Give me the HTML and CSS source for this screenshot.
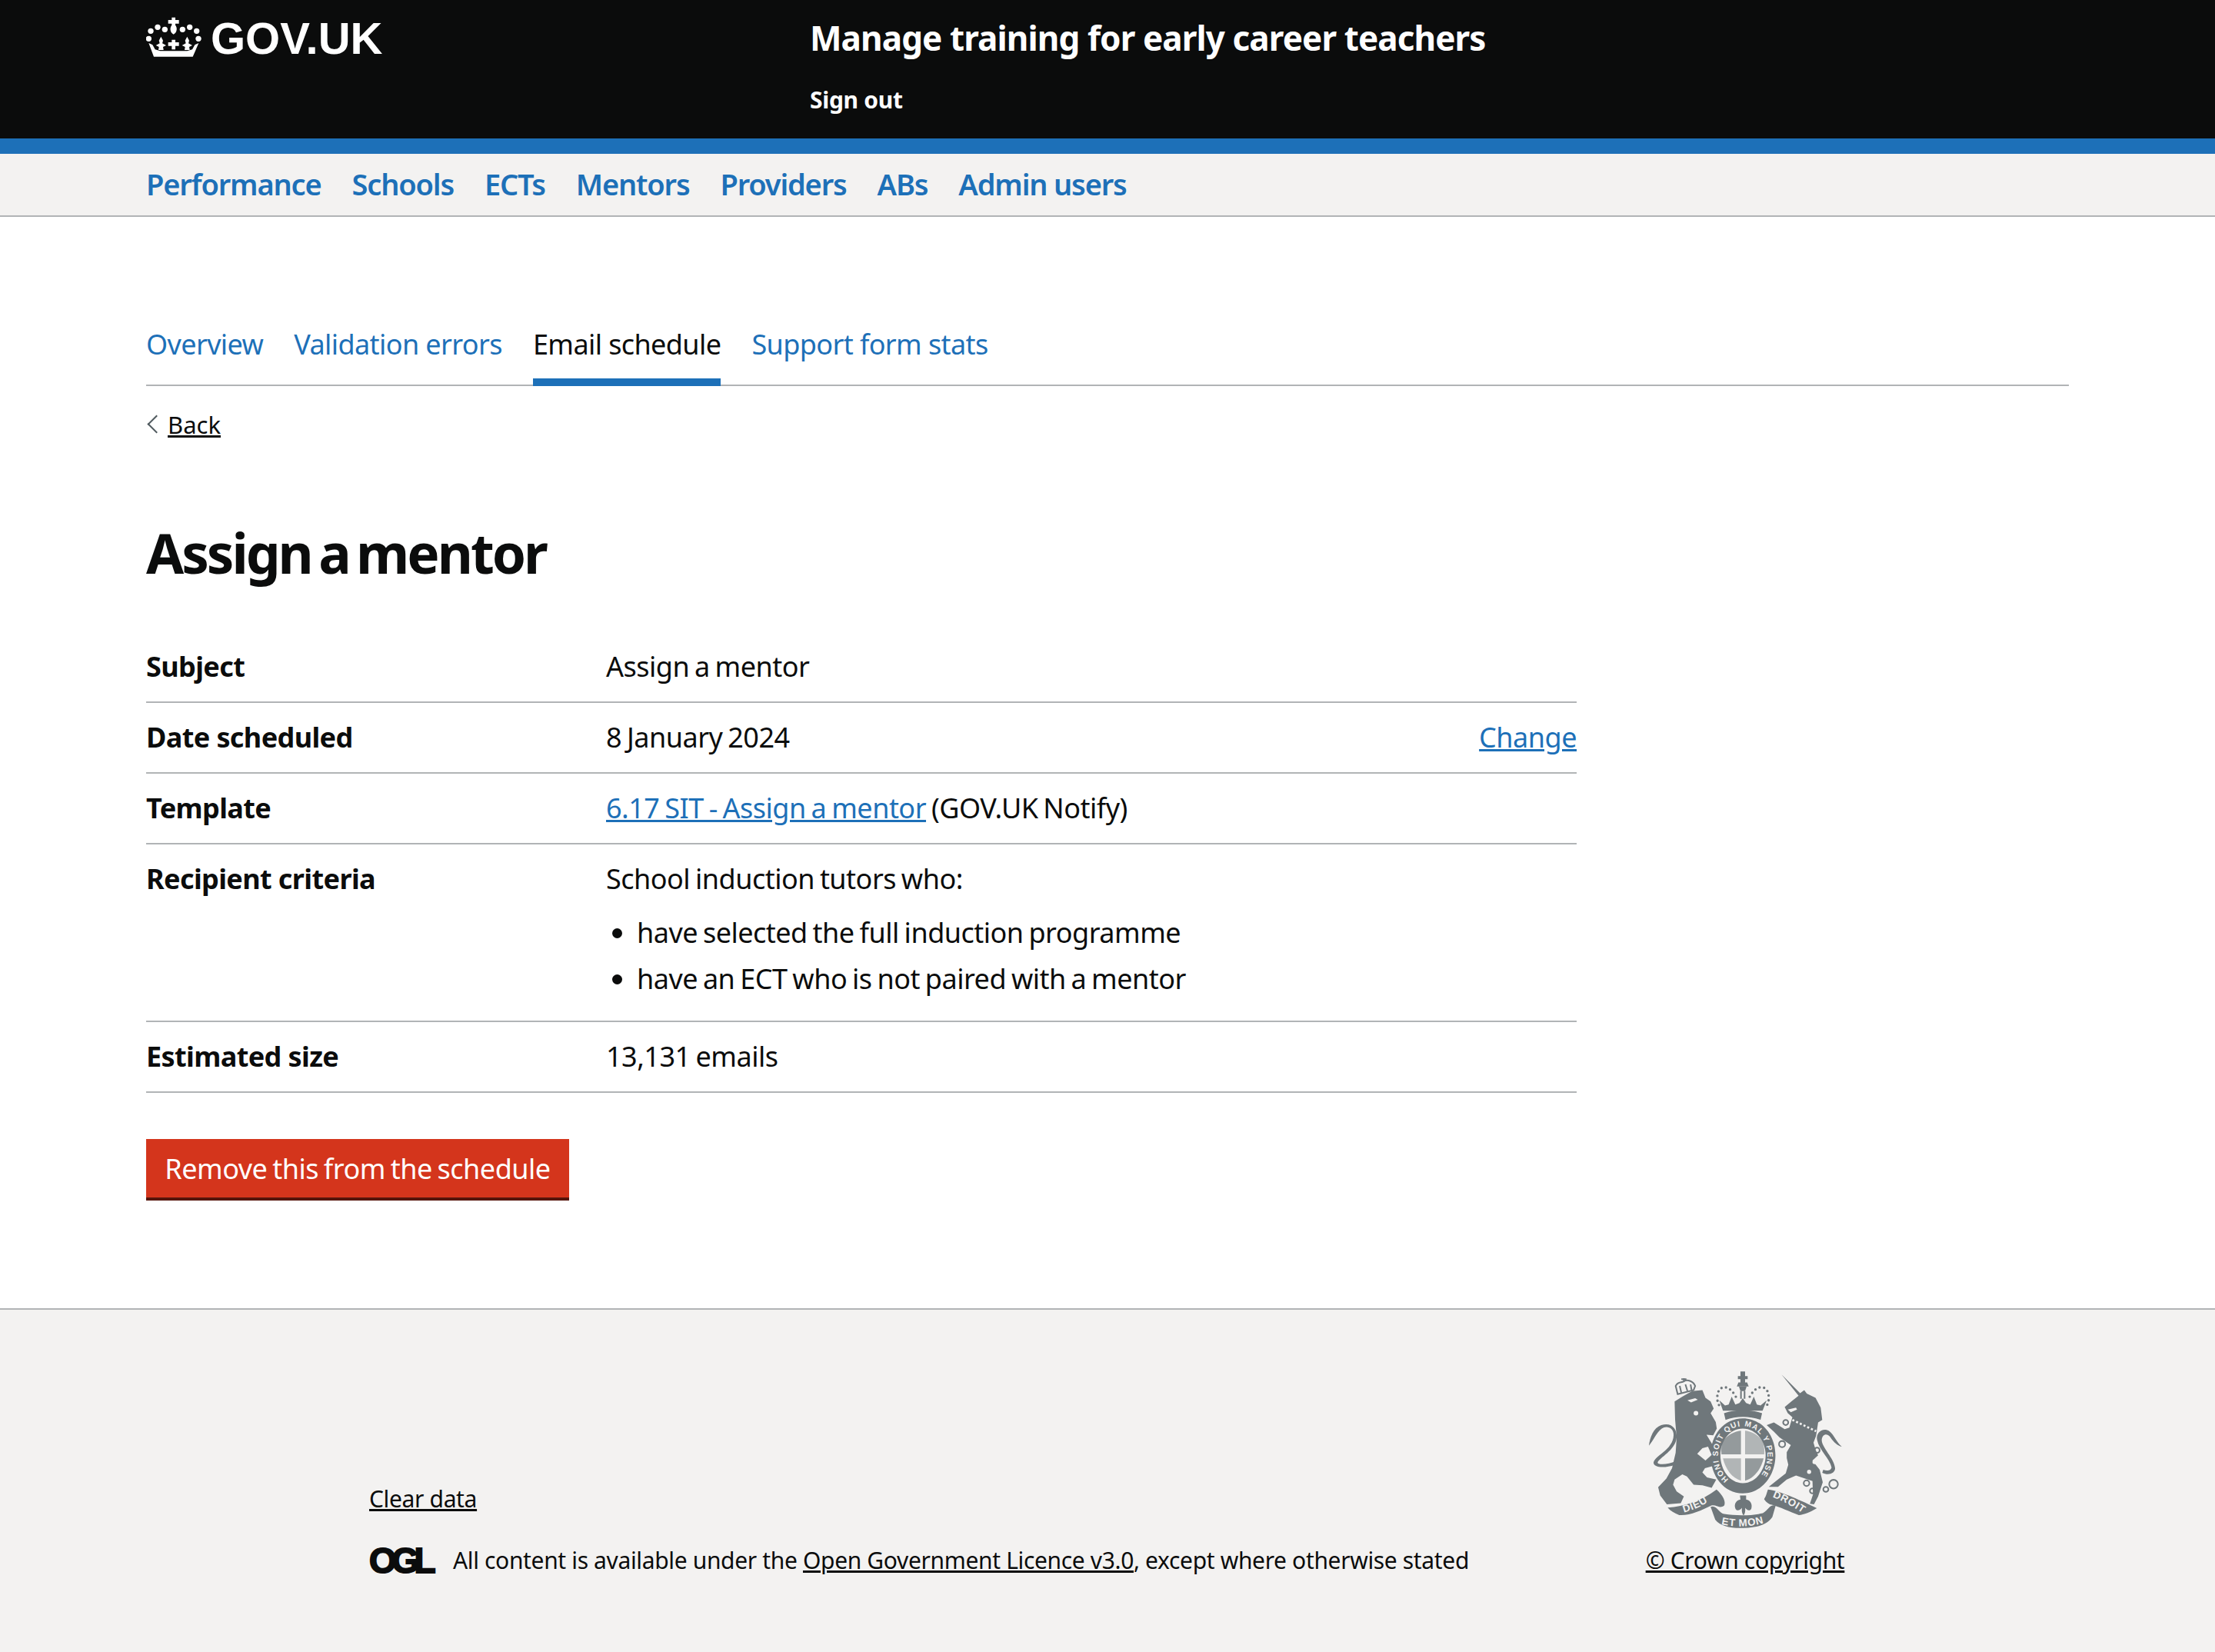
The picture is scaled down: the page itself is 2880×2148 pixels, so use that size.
FILE: index.html
```html
<!DOCTYPE html>
<html lang="en">

<head>
    <meta charset="UTF-8">
    <title>Email schedule - Manage training for early career teachers</title>
    <link rel="stylesheet" href="styles.css">
</head>

<body>
    <!-- Black GOV.UK header -->
    <header class="header">
        <div class="header-logo">
            <svg class="crown" viewBox="90 60 216 162" fill="#fff" aria-hidden="true">
                <circle cx="108" cy="118" r="11"/><circle cx="135" cy="103" r="11"/><circle cx="163" cy="112" r="11"/>
                <circle cx="232" cy="112" r="11"/><circle cx="260" cy="103" r="11"/><circle cx="287" cy="118" r="11"/>
                <circle cx="100" cy="148" r="11"/><circle cx="294" cy="148" r="11"/>
                <path d="M190 65h14v10h14v14h-14v6c8 8 8 28-7 36c-15-8-15-28-7-36v-6h-14v-14h14z"/>
                <path d="M190 152h14v10h14v14h-14v14h-14v-14h-14v-14h14z"/>
                <path d="M148 140L156 155L153 166L168 174L156 180L158 192H138L140 180L128 174L143 166L140 155Z"/>
                <path d="M250 140L258 155L255 166L270 174L258 180L260 192H240L242 180L230 174L245 166L242 155Z"/>
                <path d="M100 165L115 172L125 190L145 196H250L270 190L280 172L295 165L272 218H120Z"/>
            </svg>
            <span class="logo-text">GOV.UK</span>
        </div>
        <div class="header-service">
            <div class="service-name">Manage training for early career teachers</div>
            <a class="sign-out" href="#">Sign out</a>
        </div>
    </header>
    <div class="header-stripe"></div>

    <!-- Primary nav -->
    <nav class="primary-nav">
        <a href="#">Performance</a>
        <a href="#">Schools</a>
        <a href="#">ECTs</a>
        <a href="#">Mentors</a>
        <a href="#">Providers</a>
        <a href="#">ABs</a>
        <a href="#">Admin users</a>
    </nav>

    <main class="main">
        <div class="sub-nav">
            <a class="sub-nav-item" href="#">Overview</a>
            <a class="sub-nav-item" href="#">Validation errors</a>
            <a class="sub-nav-item sub-nav-current" href="#">Email schedule</a>
            <a class="sub-nav-item" href="#">Support form stats</a>
        </div>

        <a class="back-link" href="#"><span>Back</span></a>

        <h1 class="title">Assign a mentor</h1>

        <div class="summary">
            <div class="summary-row">
                <div class="summary-key">Subject</div>
                <div class="summary-value">Assign a mentor</div>
            </div>
            <div class="summary-row">
                <div class="summary-key">Date scheduled</div>
                <div class="summary-value">8 January 2024</div>
                <a class="summary-action" href="#">Change</a>
            </div>
            <div class="summary-row">
                <div class="summary-key">Template</div>
                <div class="summary-value"><a class="link" href="#">6.17 SIT - Assign a mentor</a> (GOV.UK Notify)</div>
            </div>
            <div class="summary-row">
                <div class="summary-key">Recipient criteria</div>
                <div class="summary-value">
                    <p class="criteria-intro">School induction tutors who:</p>
                    <ul class="criteria-list">
                        <li>have selected the full induction programme</li>
                        <li>have an ECT who is not paired with a mentor</li>
                    </ul>
                </div>
            </div>
            <div class="summary-row">
                <div class="summary-key">Estimated size</div>
                <div class="summary-value">13,131 emails</div>
            </div>
        </div>

        <button class="button-warning">Remove this from the schedule</button>
    </main>

    <!-- Footer -->
    <footer class="footer">
        <div class="footer-left">
            <a class="footer-link" href="#">Clear data</a>
            <div class="licence">
                <span class="ogl">OGL</span>
                <span>All content is available under the <a class="footer-link" href="#">Open Government Licence v3.0</a>, except where otherwise stated</span>
            </div>
        </div>
        <div class="footer-right">
            <svg class="crest" viewBox="130 70 752 622" aria-hidden="true">
                <defs>
                    <path id="garter" d="M442 493.4A96 114 0 1 1 552 493.4"/>
                    <path id="ribbon-left" d="M268 622C310 610 345 595 376 570"/>
                    <path id="ribbon-mid" d="M414 668C460 680 540 678 586 660"/>
                    <path id="ribbon-right" d="M612 562C650 576 695 600 732 626"/>
                </defs>
                <g class="crest-solid">
                    <!-- lion -->
                    <path d="M300 150L340 146L352 176L372 190L384 218L372 236L392 270L396 296L382 322L356 320L404 400L408 424L386 440L350 450L340 466L358 486L394 494L376 526L340 516L306 514L280 482L262 474L232 494L226 514L240 540L268 560L256 586L202 590L176 556L168 524L200 490L222 450L236 390L240 330L234 262L232 190L262 172Z"/>
                    <path d="M234 436C190 452 150 446 150 428C156 400 226 378 228 322C230 292 200 282 182 296C160 312 152 340 132 362C136 330 150 292 180 282C220 270 242 296 240 330C236 380 170 410 166 428C166 438 210 436 236 422Z"/>
                    <!-- crown over shield -->
                    <path d="M488 74H506V92H516V104H506V116H514L520 132H474L480 116H488V104H478V92H488Z"/>
                    <path d="M482 132H512L506 150H488Z"/>
                    <path d="M420 226L406 186L428 206L442 202L454 172L468 202L484 196L497 178L510 196L526 202L540 172L552 202L566 206L590 186L574 226Z"/>
                    <path d="M424 236C470 220 526 220 572 236L566 262C526 246 470 246 430 262Z"/>
                    <!-- garter -->
                    <path fill-rule="evenodd" d="M497 256C570 256 624 320 624 400C624 480 570 548 497 548C424 548 372 480 372 400C372 320 424 256 497 256ZM497 296C446 296 410 344 410 400C410 456 446 508 497 508C548 508 586 456 586 400C586 344 548 296 497 296Z"/>
                    <!-- unicorn -->
                    <path d="M648 86L720 158L736 146L746 160L780 176L800 214L806 262L790 272L782 324L772 350L780 378L790 400L768 420L796 456L808 504L790 560L774 590L758 588L770 552L768 500L704 478L668 494L634 522L598 522L626 500L664 470L674 436L668 410L668 388L684 360L640 330L618 308L590 282L618 272L660 298L678 292L690 252L672 236L660 212L684 192L714 168Z"/>
                    <path d="M786 340C780 310 810 290 834 306C852 320 862 350 882 366C866 362 852 350 838 330C826 312 806 316 804 340C804 370 852 410 856 450C856 470 830 480 806 468L810 456C826 462 842 458 842 446C836 414 794 380 786 340Z"/>
                    <!-- ribbon -->
                    <path d="M205 603C270 600 340 575 395 533C420 555 432 580 425 595C405 610 395 590 375 595C335 615 290 635 250 632C232 625 215 615 205 603Z"/>
                    <path d="M372 600C395 590 405 625 425 628C470 635 530 635 575 625C600 610 600 590 625 595L612 640C590 670 560 680 500 682C450 684 410 675 390 650Z"/>
                    <path d="M580 570C590 555 590 545 595 533C650 540 730 580 785 605C760 620 735 630 715 632C680 620 640 600 610 592C600 590 590 585 580 570Z"/>
                    <!-- fleur under shield -->
                    <path d="M486 556H510L510 572C526 574 536 590 530 608C522 620 510 610 506 604C508 616 506 626 500 634C494 626 492 616 494 604C488 612 474 620 468 606C462 590 472 574 488 572Z"/>
                </g>
                <g class="crest-line">
                    <path class="crest-dots" d="M470 172C440 116 396 128 398 178C398 194 404 206 412 214"/>
                    <path class="crest-dots" d="M524 172C554 116 600 128 598 178C598 194 592 206 584 214"/>
                    <path class="crest-thin" d="M490 150V180M504 150V180"/>
                    <!-- lion crown -->
                    <path class="crest-thin" d="M244 162L236 130C244 112 258 118 268 112C280 104 304 110 312 130L306 146Z"/>
                    <path class="crest-thin" d="M268 112V100M258 104H278M252 130L258 156M274 124L282 150M294 124L298 146"/>
                    <!-- chains -->
                    <path class="crest-thin" d="M654 272a10 10 0 1 0 20 0a10 10 0 1 0 -20 0M638 356a12 12 0 1 0 24 0a12 12 0 1 0 -24 0M776 380a10 10 0 1 0 20 0a10 10 0 1 0 -20 0M734 508a11 11 0 1 0 22 0a11 11 0 1 0 -22 0M758 538a10 10 0 1 0 20 0a10 10 0 1 0 -20 0M810 532a10 10 0 1 0 20 0a10 10 0 1 0 -20 0M833 512a17 17 0 1 0 34 0a17 17 0 1 0 -34 0"/>
                    <path d="M340 320L404 410" stroke-width="3"/>
                </g>
                <!-- shield quarters and small light details -->
                <g class="crest-solid">
                    <path d="M420 344C438 320 466 306 490 304V396H414C412 376 414 360 420 344Z" opacity="0.72"/>
                    <path d="M506 304C530 306 560 322 574 346C580 362 582 380 580 396H506Z" opacity="0.5"/>
                    <path d="M420 412H490V498C456 490 430 454 420 412Z" opacity="0.5"/>
                    <path d="M506 412H578C568 454 540 490 506 498Z" opacity="0.72"/>
                </g>
                <g class="crest-light">
                    <circle cx="776" cy="426" r="8"/>
                    <circle cx="755" cy="464" r="8"/>
                    <circle cx="315" cy="236" r="9"/>
                    <path d="M282 186L312 178L322 184L296 194Z"/>
                    <path d="M340 372L362 366L376 398L352 420L320 394Z"/>
                    <path d="M672 222L704 214L708 222L684 232Z"/>
                </g>
                <path class="crest-collar" d="M690 262L782 306"/>
                <g class="crest-text">
                    <text class="crest-garter"><textPath href="#garter" textLength="515" lengthAdjust="spacing">HONI SOIT QUI MAL Y PENSE</textPath></text>
                    <text><textPath href="#ribbon-left">DIEU</textPath></text>
                    <text><textPath href="#ribbon-mid">ET MON</textPath></text>
                    <text><textPath href="#ribbon-right">DROIT</textPath></text>
                </g>
            </svg>
            <a class="footer-link" href="#">© Crown copyright</a>
        </div>
    </footer>
</body>

</html>
```

FILE: styles.css
```css
body {
    margin: 0;
    font-family: "Noto Sans", sans-serif;
    font-size: 36px;
    line-height: 46px;
    color: #0b0c0c;
    background-color: #fff;
}

a {
    color: #1d70b8;
}

/* Black header */
.header {
    display: flex;
    height: 180px;
    padding-left: 190px;
    box-sizing: border-box;
    background-color: #0b0c0c;
    color: #fff;
}

.header-logo {
    display: flex;
    align-items: center;
    align-self: flex-start;
    gap: 12px;
    width: 863px;
    height: 100px;
}

.crown {
    width: 72px;
    height: 54px;
    margin-top: -5px;
}

.logo-text {
    font-family: "Liberation Sans", sans-serif;
    font-size: 58px;
    font-weight: 700;
}

.service-name {
    margin-top: 24px;
    font-size: 44px;
    line-height: 50px;
    font-weight: 700;
    letter-spacing: -0.9px;
}

.sign-out {
    display: block;
    margin-top: 33px;
    font-size: 30px;
    line-height: 46px;
    font-weight: 700;
    letter-spacing: -0.3px;
    color: #fff;
    text-decoration: none;
}

.header-stripe {
    height: 20px;
    background-color: #1d70b8;
}

/* Grey primary nav */
.primary-nav {
    display: flex;
    gap: 40px;
    height: 80px;
    padding-left: 190px;
    align-items: center;
    background-color: #f3f2f1;
    border-bottom: 2px solid #b1b4b6;
}

.primary-nav a {
    font-size: 38px;
    line-height: 46px;
    margin-top: -2px;
    font-weight: 600;
    letter-spacing: -1.17px;
    text-decoration: none;
}

.main {
    margin: 0 190px;
    height: 1419px;
}

/* Sub navigation tabs */
.sub-nav {
    display: flex;
    gap: 40px;
    height: 220px;
    box-sizing: border-box;
    border-bottom: 2px solid #b1b4b6;
}

.sub-nav-item {
    height: 220px;
    box-sizing: border-box;
    padding-top: 143px;
    text-decoration: none;
    letter-spacing: -0.6px;
}

.sub-nav-current {
    color: #0b0c0c;
    border-bottom: 10px solid #1d70b8;
}

/* Back link */
.back-link {
    display: block;
    position: relative;
    margin-top: 30px;
    padding-left: 28px;
    font-size: 31px;
    line-height: 40px;
    color: #0b0c0c;
}

.back-link::before {
    content: "";
    position: absolute;
    left: 5px;
    top: 11px;
    width: 15px;
    height: 15px;
    border-left: 2px solid #505a5f;
    border-bottom: 2px solid #505a5f;
    transform: rotate(45deg);
}

.title {
    margin: 101px 0 0;
    font-size: 71px;
    line-height: 92px;
    font-weight: 700;
    letter-spacing: -3px;
    word-spacing: -6px;
}

/* Summary list */
.summary {
    width: 1860px;
    margin-top: 57px;
    letter-spacing: -0.5px;
    word-spacing: -2px;
}

.summary-row {
    display: flex;
    padding: 22px 0;
    border-bottom: 2px solid #b1b4b6;
}

.summary-key {
    width: 598px;
    font-weight: 700;
    letter-spacing: -0.6px;
    word-spacing: 0;
}

.summary-value {
    flex: 1;
}

.link,
.summary-action {
    color: #1d70b8;
}

.criteria-intro {
    margin: 0 0 24px;
}

.criteria-list {
    margin: 0 0 9px;
    padding-left: 40px;
}

.criteria-list li {
    margin-bottom: 14px;
}

.criteria-list li:last-child {
    margin-bottom: 0;
}

.button-warning {
    display: block;
    margin-top: 60px;
    width: 550px;
    height: 80px;
    border: 0;
    border-bottom: 4px solid #55150b;
    background-color: #d4351c;
    color: #fff;
    font-family: inherit;
    font-size: 36px;
    letter-spacing: -0.5px;
    word-spacing: -2px;
}

/* Footer */
.footer {
    display: flex;
    align-items: flex-end;
    height: 447px;
    box-sizing: border-box;
    padding: 0 0 98px 480px;
    background-color: #f3f2f1;
    border-top: 2px solid #b1b4b6;
    font-size: 30px;
    line-height: 42px;
    letter-spacing: -0.35px;
}

.footer-link {
    color: #0b0c0c;
}

.footer-left {
    width: 1658px;
}

.licence {
    display: flex;
    align-items: center;
    gap: 27px;
    margin-top: 38px;
}

.ogl {
    width: 82px;
    font-family: "Liberation Sans", sans-serif;
    font-size: 46px;
    font-weight: 700;
    letter-spacing: -6.5px;
    -webkit-text-stroke: 2px #0b0c0c;
}

.footer-right {
    display: flex;
    flex-direction: column;
    align-items: center;
    gap: 18px;
    width: 262px;
}

.crest {
    width: 252px;
    height: 208px;
}

/* Royal arms */
.crest-solid {
    fill: #6f777b;
}

.crest-line {
    fill: none;
    stroke: #6f777b;
}

.crest-dots {
    stroke-width: 10px;
    stroke-linecap: round;
    stroke-dasharray: 0 18;
}

.crest-thin {
    stroke-width: 6px;
}

.crest-light {
    fill: #f3f2f1;
}

.crest-collar {
    fill: none;
    stroke: #f3f2f1;
    stroke-width: 8px;
    stroke-dasharray: 8 8;
}

.crest-text {
    font-family: "Liberation Sans", sans-serif;
    font-size: 40px;
    font-weight: 700;
    letter-spacing: 2px;
    fill: #f3f2f1;
}

.crest-garter {
    font-size: 30px;
    letter-spacing: 0;
}
```
